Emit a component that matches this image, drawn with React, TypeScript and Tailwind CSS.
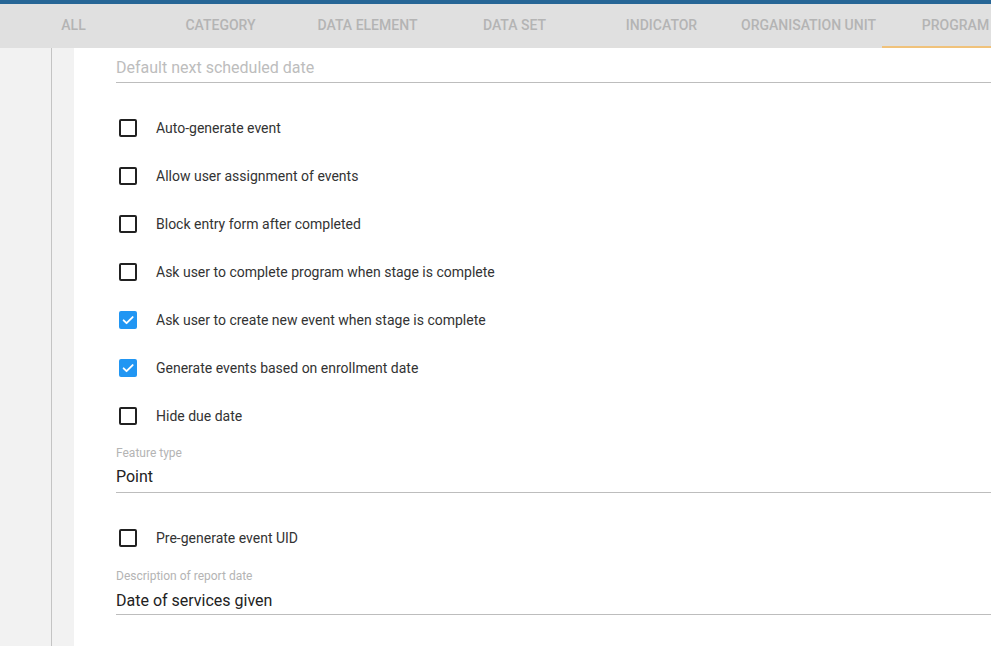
import React from "react";

const tabs = ["ALL", "CATEGORY", "DATA ELEMENT", "DATA SET", "INDICATOR", "ORGANISATION UNIT", "PROGRAM"];

function Check({ checked, label }: { checked?: boolean; label: string }) {
  return (
    <div className="flex h-[48px] items-center">
      <div className="flex h-[24px] w-[24px] items-center justify-center">
        {checked ? (
          <div className="flex h-[18px] w-[18px] items-center justify-center rounded-[2px] bg-[#2196f3]">
            <svg width="14" height="14" viewBox="0 0 24 24">
              <path d="M4.5 12.5l5 5L20 7" fill="none" stroke="white" strokeWidth="3.2" strokeLinecap="round" strokeLinejoin="round" />
            </svg>
          </div>
        ) : (
          <div className="h-[18px] w-[18px] rounded-[2px] border-2 border-[#212121]" />
        )}
      </div>
      <span className="ml-[16px] text-[14px] leading-[20px] text-[#333333]">{label}</span>
    </div>
  );
}

export default function App() {
  return (
    <div className="h-[646px] w-[991px] overflow-hidden bg-white" style={{ fontFamily: "Roboto, 'Liberation Sans', sans-serif" }}>
      <div className="h-[4px] bg-[#276696]" />
      <div className="flex h-[44px] bg-[#e0e0e0]">
        {tabs.map((t) => (
          <div key={t} className="flex w-[147px] shrink-0 flex-col">
            <div className="flex flex-1 items-center justify-center text-[14px] font-medium text-[#b4b4b4]">{t}</div>
            <div className={t === "PROGRAM" ? "h-[2px] bg-[#f0c27b]" : "h-[2px]"} />
          </div>
        ))}
      </div>
      <div className="flex h-[598px]">
        <div className="flex w-[74px] shrink-0 bg-[#f2f2f2]">
          <div className="w-[52px] border-r border-[#c4c4c4]" />
        </div>
        <div className="flex-1 pl-[42px]">
          <div className="border-b border-[#bdbdbd] pb-[2px] pt-[8px]">
            <div className="text-[16px] leading-[24px] text-[#bdbdbd]">Default next scheduled date</div>
          </div>
          <div className="mt-[21px]">
            <Check label="Auto-generate event" />
            <Check label="Allow user assignment of events" />
            <Check label="Block entry form after completed" />
            <Check label="Ask user to complete program when stage is complete" />
            <Check checked label="Ask user to create new event when stage is complete" />
            <Check checked label="Generate events based on enrollment date" />
            <Check label="Hide due date" />
          </div>
          <div className="border-b border-[#bdbdbd] pb-[3px] pt-[5px]">
            <div className="text-[12px] leading-[16px] text-[#b4b4b4]">Feature type</div>
            <div className="mt-[4px] text-[16px] leading-[24px] text-[#222222]">Point</div>
          </div>
          <div className="mt-[21px]">
            <Check label="Pre-generate event UID" />
          </div>
          <div className="border-b border-[#bdbdbd] pb-[1px] pt-[6px]">
            <div className="text-[12px] leading-[16px] text-[#b4b4b4]">Description of report date</div>
            <div className="mt-[5px] text-[16px] leading-[24px] text-[#222222]">Date of services given</div>
          </div>
        </div>
      </div>
    </div>
  );
}
